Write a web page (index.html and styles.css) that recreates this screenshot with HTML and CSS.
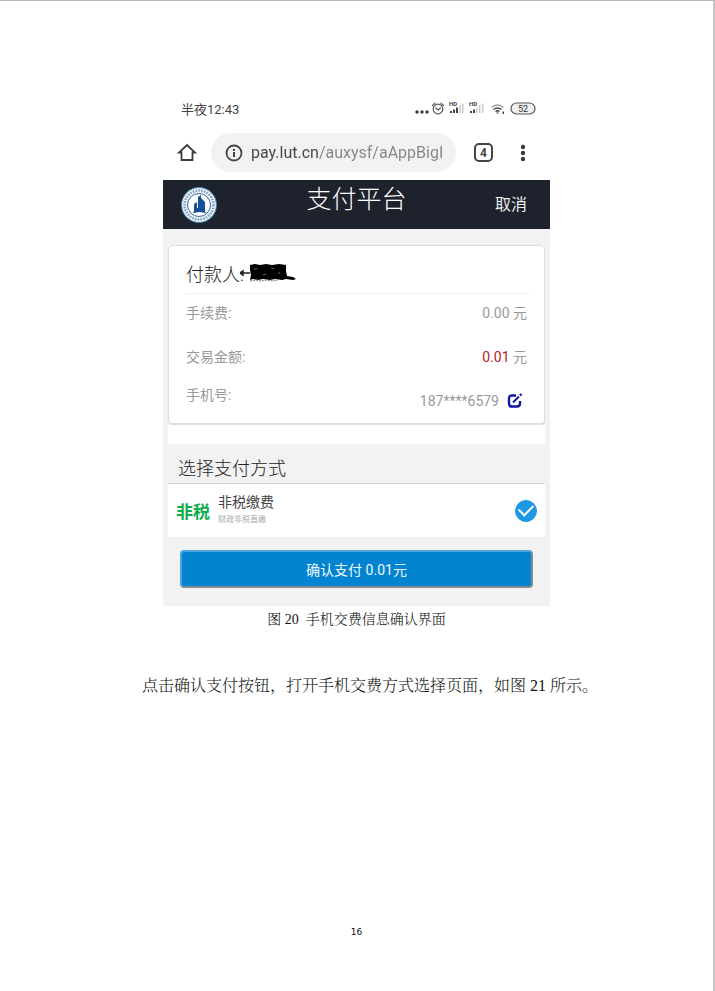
FILE: index.html
```html
<!DOCTYPE html>
<html lang="zh-Hans">
<head>
  <meta charset="UTF-8">
  <meta name="viewport" content="width=device-width, initial-scale=1">
  <title>手机交费信息确认界面</title>
  <link rel="stylesheet" href="styles.css">
</head>
<body>

<main class="page">
  <figure class="figure">
    <div class="phone">

      <!-- 手机状态栏 -->
      <div class="status-bar">
        <span class="clock">半夜12:43</span>
        <svg class="status-icons" width="122" height="18" viewBox="0 0 122 18">
          <g fill="#3c3c3c">
            <circle cx="3" cy="12" r="1.7"/>
            <circle cx="8" cy="12" r="1.7"/>
            <circle cx="13" cy="12" r="1.7"/>
          </g>
          <g fill="none" stroke="#555" stroke-width="1.2" stroke-linecap="round">
            <circle cx="24" cy="9" r="4.8"/>
            <path d="M18.5 5.5l2.6-2.4M29.5 5.5l-2.6-2.4M21.8 8l2.2 2 2.4-2"/>
          </g>
          <g fill="#444">
            <path d="M36 11h2v2h-2zM39 9.500h2v3.500h-2zM42 7.500h2v5.500h-2z"/>
            <path d="M56 11h2v2h-2zM59 9.500h2v3.500h-2z"/>
          </g>
          <path d="M45.500 5h1.500v8h-1.500zM48 3.500h1.500v9.500h-1.500zM62 7.500h1.500v5.500h-1.500zM65 5h1.500v8h-1.500zM68 3.500h1.500v9.500h-1.500z" fill="#c8c8c8"/>
          <text class="hd" x="35" y="6">HD</text>
          <text class="hd" x="55" y="6">HD</text>
          <g fill="none" stroke="#444" stroke-width="1.4">
            <path d="M77.500 7.500q6-5 12 0" stroke="#999"/>
            <path d="M79.500 9.500q4-3 8 0M81.500 11.500q2-1.500 4 0"/>
          </g>
          <path d="M82 12.500h3l-1.500 1.500zM88.500 11.500h1.500v2.500h-1.500z" fill="#444"/>
          <rect x="97" y="3" width="24" height="11" rx="5.500" fill="#eee" stroke="#555" stroke-width="1.200"/>
          <text class="battery" x="109" y="12">52</text>
        </svg>
      </div>

      <!-- 浏览器地址栏 -->
      <div class="browser-bar">
        <button class="icon-btn" type="button" aria-label="主页">
          <svg width="20" height="20" viewBox="0 0 20 20" fill="none" stroke="#3c3c3c" stroke-width="1.800">
            <path d="M4.500 17V9.500H2L10 2l8 7.500h-2.500V17z"/>
          </svg>
        </button>
        <div class="address">
          <svg width="18" height="18" viewBox="0 0 18 18">
            <circle cx="9" cy="9" r="7.500" fill="none" stroke="#444" stroke-width="1.800"/>
            <path d="M8 8h2v5H8zM8 5h2v2H8z" fill="#444"/>
          </svg>
          <input class="url" type="text" aria-label="网址" value="pay.lut.cn/auxysf/aAppBigI">
        </div>
        <button class="tabs" type="button" aria-label="标签页">4</button>
        <button class="icon-btn more" type="button" aria-label="更多">
          <svg width="6" height="18" viewBox="0 0 6 18" fill="#3c3c3c">
            <circle cx="3" cy="3" r="2.200"/>
            <circle cx="3" cy="9" r="2.200"/>
            <circle cx="3" cy="15" r="2.200"/>
          </svg>
        </button>
      </div>

      <header class="pay-header">
        <svg class="logo" width="38" height="38" viewBox="0 0 38 38">
          <circle cx="19" cy="19" r="17.500" fill="#e9f1f7" stroke="#3f7fb0" stroke-width="1"/>
          <circle cx="19" cy="19" r="14.500" fill="none" stroke="#7d9dbc" stroke-width="2.400" stroke-dasharray="1.500 1.300"/>
          <circle cx="19" cy="19" r="11.500" fill="#fff" stroke="#2f6ba5" stroke-width="1"/>
          <path d="M14 26v-8l3-2v6h1V11l3-2v3l4 4v10z" fill="#164f94"/>
          <path d="M13 26.500q6-2 13 0" fill="none" stroke="#164f94" stroke-width="1"/>
        </svg>
        <h1 class="pay-title">支付平台</h1>
        <button class="cancel" type="button">取消</button>
      </header>

      <div class="pay-body">
        <div class="card-wrap">
          <section class="card">
            <div class="payer">
              <span>付款人:</span>
              <svg class="mask" width="56" height="20" viewBox="0 0 56 20">
                <path d="M10 2l5-1 5 1 6-1 6 1 7-1 7 1v6l1 5 6 1 3 2-3 1-7-1-4 1-7-1-5 1-7-1-5 1-5-1-3 1 1-5-1-5z" fill="#000"/>
                <path d="M0 10l3-2v4zM2 10h8" fill="#222" stroke="#222" stroke-width="1.500"/>
                <path d="M10 18l6-1 5 1 6-1 5 1 6-1" fill="none" stroke="#777" stroke-width="1" stroke-dasharray="2 1"/>
                <path d="M14 6h3M23 12l3-1M31 5l3 1M38 10h2" stroke="#666" stroke-width="1"/>
              </svg>
            </div>
            <dl class="details">
              <div class="row">
                <dt>手续费:</dt>
                <dd>0.00 元</dd>
              </div>
              <div class="row row-amount">
                <dt>交易金额:</dt>
                <dd><span class="amount">0.01</span> 元</dd>
              </div>
              <div class="row row-mobile">
                <dt>手机号:</dt>
                <dd class="mobile">187****6579
                  <button class="edit" type="button" aria-label="修改手机号">
                    <svg width="16" height="16" viewBox="0 0 16 16" fill="none" stroke="#1414a8" stroke-width="2.400">
                      <path d="M9 2.500H5Q2 2.500 2 5.500v5Q2 13.500 5 13.500h5q3 0 3-3V8"/>
                      <path d="M6 9.500l6-6" stroke-width="2"/>
                      <path d="M13 2.500l1.500-1.500"/>
                    </svg>
                  </button>
                </dd>
              </div>
            </dl>
          </section>
        </div>

        <h2 class="section-title">选择支付方式</h2>
        <label class="method">
          <span class="method-logo">非税</span>
          <span class="method-text">
            <span class="method-name">非税缴费</span>
            <span class="method-desc">财政非税直缴</span>
          </span>
          <input class="method-radio" type="radio" name="method" checked>
        </label>

        <button class="confirm" type="button">确认支付 0.01元</button>
      </div>
    </div>
    <figcaption class="caption">图 20&nbsp; 手机交费信息确认界面</figcaption>
  </figure>

  <p class="text">点击确认支付按钮，打开手机交费方式选择页面，如图 21 所示。</p>

  <footer class="page-number">16</footer>
</main>

</body>
</html>
```
FILE: styles.css
```css
* {
  box-sizing: border-box;
}
body {
  margin: 0;
  background: #fff;
}
button, input {
  font-family: inherit;
  margin: 0;
}
button {
  cursor: pointer;
}
svg {
  display: block;
  flex: none;
}

/* 文档页 */
.page {
  display: flex;
  flex-direction: column;
  min-height: 100vh;
  padding: 92px 16px 51px;
  border-top: 1px solid #b8b8b8;
  border-right: 2px solid #c4c4c4;
  font-family: "Liberation Serif", "Noto Serif CJK SC", "Noto Sans CJK SC", serif;
  color: #111;
}
.figure {
  width: 100%;
  max-width: 387px;
  margin: 0 auto;
}
.caption {
  margin-top: 4px;
  font-size: 14px;
  line-height: 20px;
  font-weight: 300;
  text-align: center;
}
.text {
  margin: 44px 0 0;
  padding-left: 126px;
  font-size: 16px;
  line-height: 24px;
  font-weight: 300;
}
.page-number {
  margin-top: auto;
  font-family: "DejaVu Sans", sans-serif;
  font-size: 9px;
  line-height: 16px;
  text-align: center;
}

/* 手机截图 */
.phone {
  font-family: Roboto, "Noto Sans CJK SC", sans-serif;
  color: #444;
}
.status-bar {
  display: flex;
  justify-content: space-between;
  align-items: center;
  height: 32px;
  padding: 0 14px 0 18px;
}
.clock {
  padding-bottom: 2px;
  font-size: 13px;
}
.hd {
  font-size: 6px;
  font-weight: bold;
  fill: #444;
}
.battery {
  font-size: 9px;
  text-anchor: middle;
  fill: #333;
}
.browser-bar {
  display: flex;
  align-items: center;
  height: 55px;
  padding: 0 24px 0 14px;
}
.icon-btn {
  padding: 0;
  border: 0;
  background: none;
}
.address {
  display: flex;
  flex: 1;
  align-items: center;
  gap: 8px;
  min-width: 0;
  height: 39px;
  margin: 0 18px 0 14px;
  padding: 0 6px 0 14px;
  border-radius: 20px;
  background: #f1f2f3;
}
.url {
  flex: 1;
  min-width: 0;
  padding: 0;
  border: 0;
  outline: 0;
  font-size: 16px;
  background: linear-gradient(to right, #444 68px, #858585 68px);
  background-clip: text;
  -webkit-background-clip: text;
  color: transparent;
}
.tabs {
  width: 19px;
  height: 19px;
  padding: 0;
  border: 2px solid #444;
  border-radius: 5px;
  background: none;
  font-size: 12px;
  line-height: 14px;
  font-weight: bold;
  color: #444;
}
.more {
  margin-left: 27px;
}

.pay-header {
  display: grid;
  grid-template-columns: 60px 1fr 60px;
  align-items: center;
  height: 49px;
  padding: 0 17px;
  background: #1e222d;
  color: #fff;
}
.pay-title {
  margin: 0;
  padding-bottom: 10px;
  font-size: 25px;
  line-height: 28px;
  font-weight: 300;
  text-align: center;
}
.cancel {
  padding: 0 6px 4px 0;
  border: 0;
  background: none;
  font-size: 16px;
  text-align: right;
  color: #eee;
}
.pay-body {
  padding: 16px 5px 18px;
  background: #f2f2f2;
}
.card-wrap {
  padding-bottom: 20px;
  background: #fff;
}
.card {
  padding: 9px 14px 12px 17px;
  border: 1px solid #ddd;
  border-radius: 4px;
  background: #fff;
  box-shadow: 0 1px 1px #ddd;
}
.payer {
  display: flex;
  align-items: center;
  height: 39px;
  padding-bottom: 2px;
  border-bottom: 1px solid #eee;
  font-size: 18px;
  font-weight: 300;
  color: #222;
}
.mask {
  margin-left: -4px;
}
.details {
  margin: 0;
  font-size: 14px;
  line-height: 20px;
  color: #999;
}
.row {
  display: flex;
  justify-content: space-between;
  padding: 9px 3px 0 0;
}
.row-amount {
  padding-top: 24px;
}
.row-mobile {
  padding-top: 18px;
}
.details dd {
  margin: 0;
}
.amount {
  color: #b92128;
}
.details .mobile {
  display: flex;
  align-items: center;
  gap: 8px;
  padding: 6px 4px 0 0;
}
.edit {
  padding: 0;
  border: 0;
  background: none;
}

.section-title {
  margin: 0;
  padding: 12px 10px 2px;
  border-bottom: 1px solid #d4d4d4;
  font-size: 18px;
  line-height: 25px;
  font-weight: 300;
  color: #222;
}
.method {
  display: flex;
  align-items: center;
  height: 53px;
  padding: 0 8px;
  background: #fff;
  cursor: pointer;
}
.method-logo {
  font-size: 17px;
  font-weight: bold;
  color: #0fab50;
}
.method-text {
  display: flex;
  flex: 1;
  flex-direction: column;
  padding-bottom: 2px;
  margin-left: 8px;
}
.method-name {
  font-size: 14px;
  line-height: 20px;
}
.method-desc {
  font-size: 8px;
  line-height: 16px;
  color: #aaa;
}
.method-radio {
  display: grid;
  place-items: center;
  appearance: none;
  width: 22px;
  height: 22px;
  border: 1px solid #bbb;
  border-radius: 50%;
}
.method-radio:checked {
  border-color: #1c98e4;
  background: #1c98e4;
}
.method-radio:checked::after {
  content: "";
  width: 12px;
  height: 7px;
  margin-bottom: 4px;
  border-left: 2px solid #fff;
  border-bottom: 2px solid #fff;
  transform: rotate(-45deg);
}
.confirm {
  display: block;
  width: calc(100% - 24px);
  height: 38px;
  margin: 13px 12px 0;
  padding: 0;
  border: 2px solid;
  border-color: #4ba6da #848c92 #848c92 #4ba6da;
  border-radius: 4px;
  background: #0284d1;
  font-size: 14px;
  color: #f2faff;
}
```
